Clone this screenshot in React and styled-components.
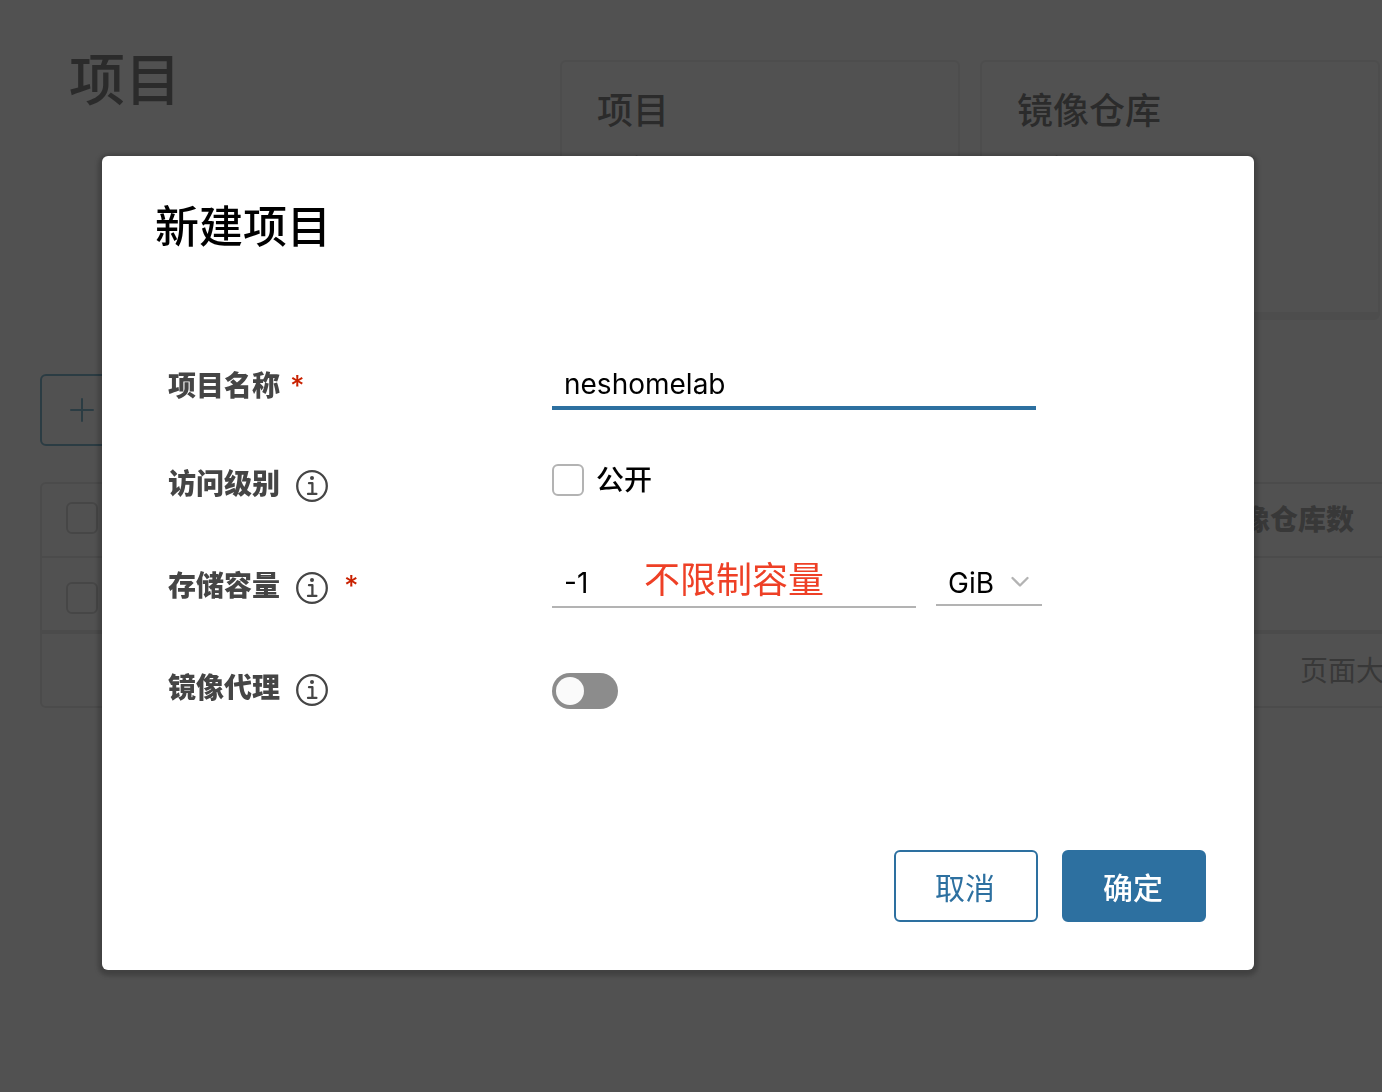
import React, { useState } from "react";
import styled, { createGlobalStyle } from "styled-components";

const GlobalStyle = createGlobalStyle`
  *, *::before, *::after { box-sizing: border-box; }
  html, body { margin: 0; height: 100%; }
  #root { min-height: 100%; }
  body {
    background: #fafafa;
    color: #000;
    overflow: hidden;
    font-family: Inter, "Noto Sans CJK SC", sans-serif;
    font-size: 28px;
    line-height: 36px;
  }
  button, input, select { font: inherit; color: inherit; margin: 0; }
`;

const Page = styled.main`
  padding: 60px 0 0 40px;
  overflow: hidden;
`;

const PageHeader = styled.header`
  display: grid;
  grid-template-columns: 500px 400px 400px;
  column-gap: 20px;
  margin-bottom: 54px;
`;

const PageTitle = styled.h1`
  margin: 0;
  padding-left: 29px;
  font-size: 56px;
  font-weight: 500;
  line-height: 40px;
`;

const StatCard = styled.section`
  height: 260px;
  padding: 30px 35px;
  background: #fff;
  border: 2px solid #e0e0e0;
  border-bottom-width: 8px;
  border-radius: 6px;
`;

const StatTitle = styled.h2`
  margin: 0 0 12px;
  font-size: 36px;
  font-weight: 500;
  line-height: 38px;
`;

const StatLabel = styled.p`
  margin: 0;
  font-size: 28px;
  line-height: 56px;
`;

const NewButton = styled.button`
  display: flex;
  align-items: center;
  width: 240px;
  height: 72px;
  margin-bottom: 36px;
  padding: 0 28px;
  background: transparent;
  border: 2px solid #0072a3;
  border-radius: 6px;
  color: #0072a3;
`;

const DataGrid = styled.table`
  width: 110%;
  min-width: 1520px;
  table-layout: fixed;
  border: 2px solid #d4d4d4;
  border-radius: 6px;
  border-collapse: separate;
  border-spacing: 0;
  background: #fff;
`;

const CheckCol = styled.col`
  width: 80px;
`;

const CountCol = styled.col`
  width: 356px;
`;

const HeadCell = styled.th`
  height: 74px;
  padding: 18px 12px 0;
  border-bottom: 2px solid #d4d4d4;
  color: #565656;
  font-weight: 900;
  text-align: left;
  vertical-align: top;
`;

const BodyCell = styled.td`
  height: 76px;
  padding: 24px 12px 0;
  border-bottom: 4px solid #d4d4d4;
  vertical-align: top;
`;

const FootCell = styled.td`
  height: 72px;
  padding: 2px 0 0 98px;
  color: #565656;
`;

const Checkbox = styled.input.attrs({ type: "checkbox" })`
  appearance: none;
  display: block;
  flex: none;
  width: 32px;
  height: 32px;
  background: #fff;
  border: 2px solid #b3b3b3;
  border-radius: 6px;

  th &, td & {
    margin-left: 12px;
  }

  &:checked {
    background: #2d70a0;
    border-color: #2d70a0;
  }
`;

const Backdrop = styled.div`
  position: fixed;
  inset: 0;
  display: flex;
  justify-content: center;
  align-items: flex-start;
  padding: 156px 26px 0 0;
  background: rgba(51, 51, 51, 0.85);
`;

const Dialog = styled.form`
  width: 100%;
  max-width: 1152px;
  padding: 42px 48px 48px;
  background: #fff;
  border-radius: 6px;
  box-shadow: 0 2px 4px 4px rgba(0, 0, 0, 0.2);
`;

const DialogTitle = styled.h2`
  margin: 0 0 104px;
  padding-left: 5px;
  font-size: 44px;
  font-weight: 500;
  line-height: 58px;
`;

const Fields = styled.div`
  display: flex;
  flex-direction: column;
  gap: 52px;
  padding-left: 18px;
  margin-bottom: 134px;
`;

const Field = styled.div`
  display: grid;
  grid-template-columns: 384px 1fr;
  align-items: ${(p) => p.$align || "center"};
  min-height: 50px;
`;

const FieldLabel = styled.div`
  display: flex;
  align-items: flex-end;
  align-self: start;
  gap: 10px;
  height: ${(p) => (p.$tall ? 44 : 40)}px;
  color: #454545;
  font-weight: 900;
`;

const Required = styled.span`
  color: #c92100;
  font-weight: 500;
`;

const InfoButton = styled.button`
  display: flex;
  padding: 0;
  margin: 0 6px;
  background: none;
  border: 0;
`;

const Controls = styled.div`
  display: flex;
  align-items: flex-start;
  gap: 20px;
`;

const InputBox = styled.div`
  position: relative;
  width: ${(p) => p.$width}px;
`;

const TextInput = styled.input`
  display: block;
  width: 100%;
  height: 44px;
  padding: 0 12px 4px;
  background: transparent;
  border: 0;
  border-bottom: ${(p) => (p.$active ? "4px solid #2d70a0" : "2px solid #b3b3b3")};
  border-radius: 0;
  outline: 0;
`;

const Note = styled.span`
  position: absolute;
  top: -4px;
  left: 92px;
  color: #ee4026;
  font-size: 36px;
  line-height: 40px;
  white-space: nowrap;
  pointer-events: none;
`;

const SelectBox = styled.div`
  position: relative;
  width: 106px;

  svg {
    position: absolute;
    top: 12px;
    right: 12px;
    pointer-events: none;
  }
`;

const UnitSelect = styled.select`
  appearance: none;
  display: block;
  width: 100%;
  height: 42px;
  padding: 0 12px 2px;
  background: transparent;
  border: 0;
  border-bottom: 2px solid #b3b3b3;
  border-radius: 0;
  outline: 0;
`;

const CheckLabel = styled.label`
  display: flex;
  align-items: center;
  gap: 12px;
  height: 36px;
  font-weight: 500;
`;

const Toggle = styled.input.attrs({ type: "checkbox", role: "switch" })`
  appearance: none;
  display: flex;
  align-items: center;
  width: 66px;
  height: 36px;
  padding: 4px;
  background: #8c8c8c;
  border-radius: 18px;

  &::before {
    content: "";
    width: 28px;
    height: 28px;
    background: #fafafa;
    border-radius: 50%;
  }

  &:checked {
    justify-content: flex-end;
    background: #2d70a0;
  }
`;

const Actions = styled.footer`
  display: flex;
  justify-content: flex-end;
  gap: 24px;
`;

const ActionButton = styled.button`
  width: 144px;
  height: 72px;
  padding: 4px 2px 0 0;
  background: ${(p) => (p.$primary ? "#2d70a0" : "#fff")};
  border: 2px solid #2d70a0;
  border-radius: 6px;
  color: ${(p) => (p.$primary ? "#fff" : "#2d70a0")};
  font-size: 30px;
  font-weight: ${(p) => (p.$primary ? 500 : 400)};
`;

function PlusIcon() {
  return (
    <svg width="24" height="24" viewBox="0 0 24 24" fill="none" stroke="currentColor" strokeWidth="2" strokeLinecap="round" aria-hidden="true">
      <path d="M12 1v22M1 12h22" />
    </svg>
  );
}

function InfoIcon() {
  return (
    <svg width="32" height="32" viewBox="0 0 32 32" fill="none" stroke="#454545" strokeWidth="2.3" strokeLinecap="round" strokeLinejoin="round" aria-hidden="true">
      <circle cx="16" cy="16" r="14.8" />
      <circle cx="16" cy="8" r="2" fill="#454545" stroke="none" />
      <path d="M13 13.2h3.4v10.6M12 23.9h8.4" />
    </svg>
  );
}

function ChevronIcon() {
  return (
    <svg width="20" height="12" viewBox="0 0 20 12" fill="none" stroke="#b3b3b3" strokeWidth="2.3" strokeLinecap="round" strokeLinejoin="round" aria-hidden="true">
      <path d="M2.5 2l7.5 7.5L17.500 2" />
    </svg>
  );
}

function Info({ label }) {
  return (
    <InfoButton type="button" aria-label={label}>
      <InfoIcon />
    </InfoButton>
  );
}

export default function App() {
  const [name, setName] = useState("neshomelab");
  const [quota, setQuota] = useState("-1");

  return (
    <>
      <GlobalStyle />
      <Page>
        <PageHeader>
          <PageTitle>项目</PageTitle>
          <StatCard>
            <StatTitle>项目</StatTitle>
            <StatLabel>私有</StatLabel>
          </StatCard>
          <StatCard>
            <StatTitle>镜像仓库</StatTitle>
            <StatLabel>私有</StatLabel>
          </StatCard>
        </PageHeader>
        <NewButton type="button" aria-label="新建项目">
          <PlusIcon />
        </NewButton>
        <DataGrid>
          <colgroup>
            <CheckCol />
            <col />
            <CountCol />
          </colgroup>
          <thead>
            <tr>
              <HeadCell><Checkbox aria-label="全选" /></HeadCell>
              <HeadCell />
              <HeadCell scope="col">镜像仓库数</HeadCell>
            </tr>
          </thead>
          <tbody>
            <tr>
              <BodyCell><Checkbox aria-label="选择" /></BodyCell>
              <BodyCell />
              <BodyCell />
            </tr>
          </tbody>
          <tfoot>
            <tr>
              <FootCell colSpan={2} />
              <FootCell>页面大小</FootCell>
            </tr>
          </tfoot>
        </DataGrid>
      </Page>

      <Backdrop>
        <Dialog role="dialog" aria-modal="true" aria-labelledby="dialog-title" onSubmit={(e) => e.preventDefault()}>
          <DialogTitle id="dialog-title">新建项目</DialogTitle>
          <Fields>
            <Field $align="end">
              <FieldLabel $tall>
                <label htmlFor="name">项目名称</label>
                <Required>*</Required>
              </FieldLabel>
              <InputBox $width={484}>
                <TextInput id="name" $active value={name} onChange={(e) => setName(e.target.value)} />
              </InputBox>
            </Field>
            <Field $align="start">
              <FieldLabel>
                <span>访问级别</span>
                <Info label="访问级别说明" />
              </FieldLabel>
              <CheckLabel htmlFor="public">
                <Checkbox id="public" />
                公开
              </CheckLabel>
            </Field>
            <Field $align="start">
              <FieldLabel>
                <label htmlFor="quota">存储容量</label>
                <Info label="存储容量说明" />
                <Required>*</Required>
              </FieldLabel>
              <Controls>
                <InputBox $width={364}>
                  <TextInput id="quota" value={quota} onChange={(e) => setQuota(e.target.value)} />
                  <Note>不限制容量</Note>
                </InputBox>
                <SelectBox>
                  <UnitSelect aria-label="单位" defaultValue="GiB">
                    <option>GiB</option>
                  </UnitSelect>
                  <ChevronIcon />
                </SelectBox>
              </Controls>
            </Field>
            <Field>
              <FieldLabel>
                <label htmlFor="proxy">镜像代理</label>
                <Info label="镜像代理说明" />
              </FieldLabel>
              <Toggle id="proxy" />
            </Field>
          </Fields>
          <Actions>
            <ActionButton type="button">取消</ActionButton>
            <ActionButton type="submit" $primary>确定</ActionButton>
          </Actions>
        </Dialog>
      </Backdrop>
    </>
  );
}
